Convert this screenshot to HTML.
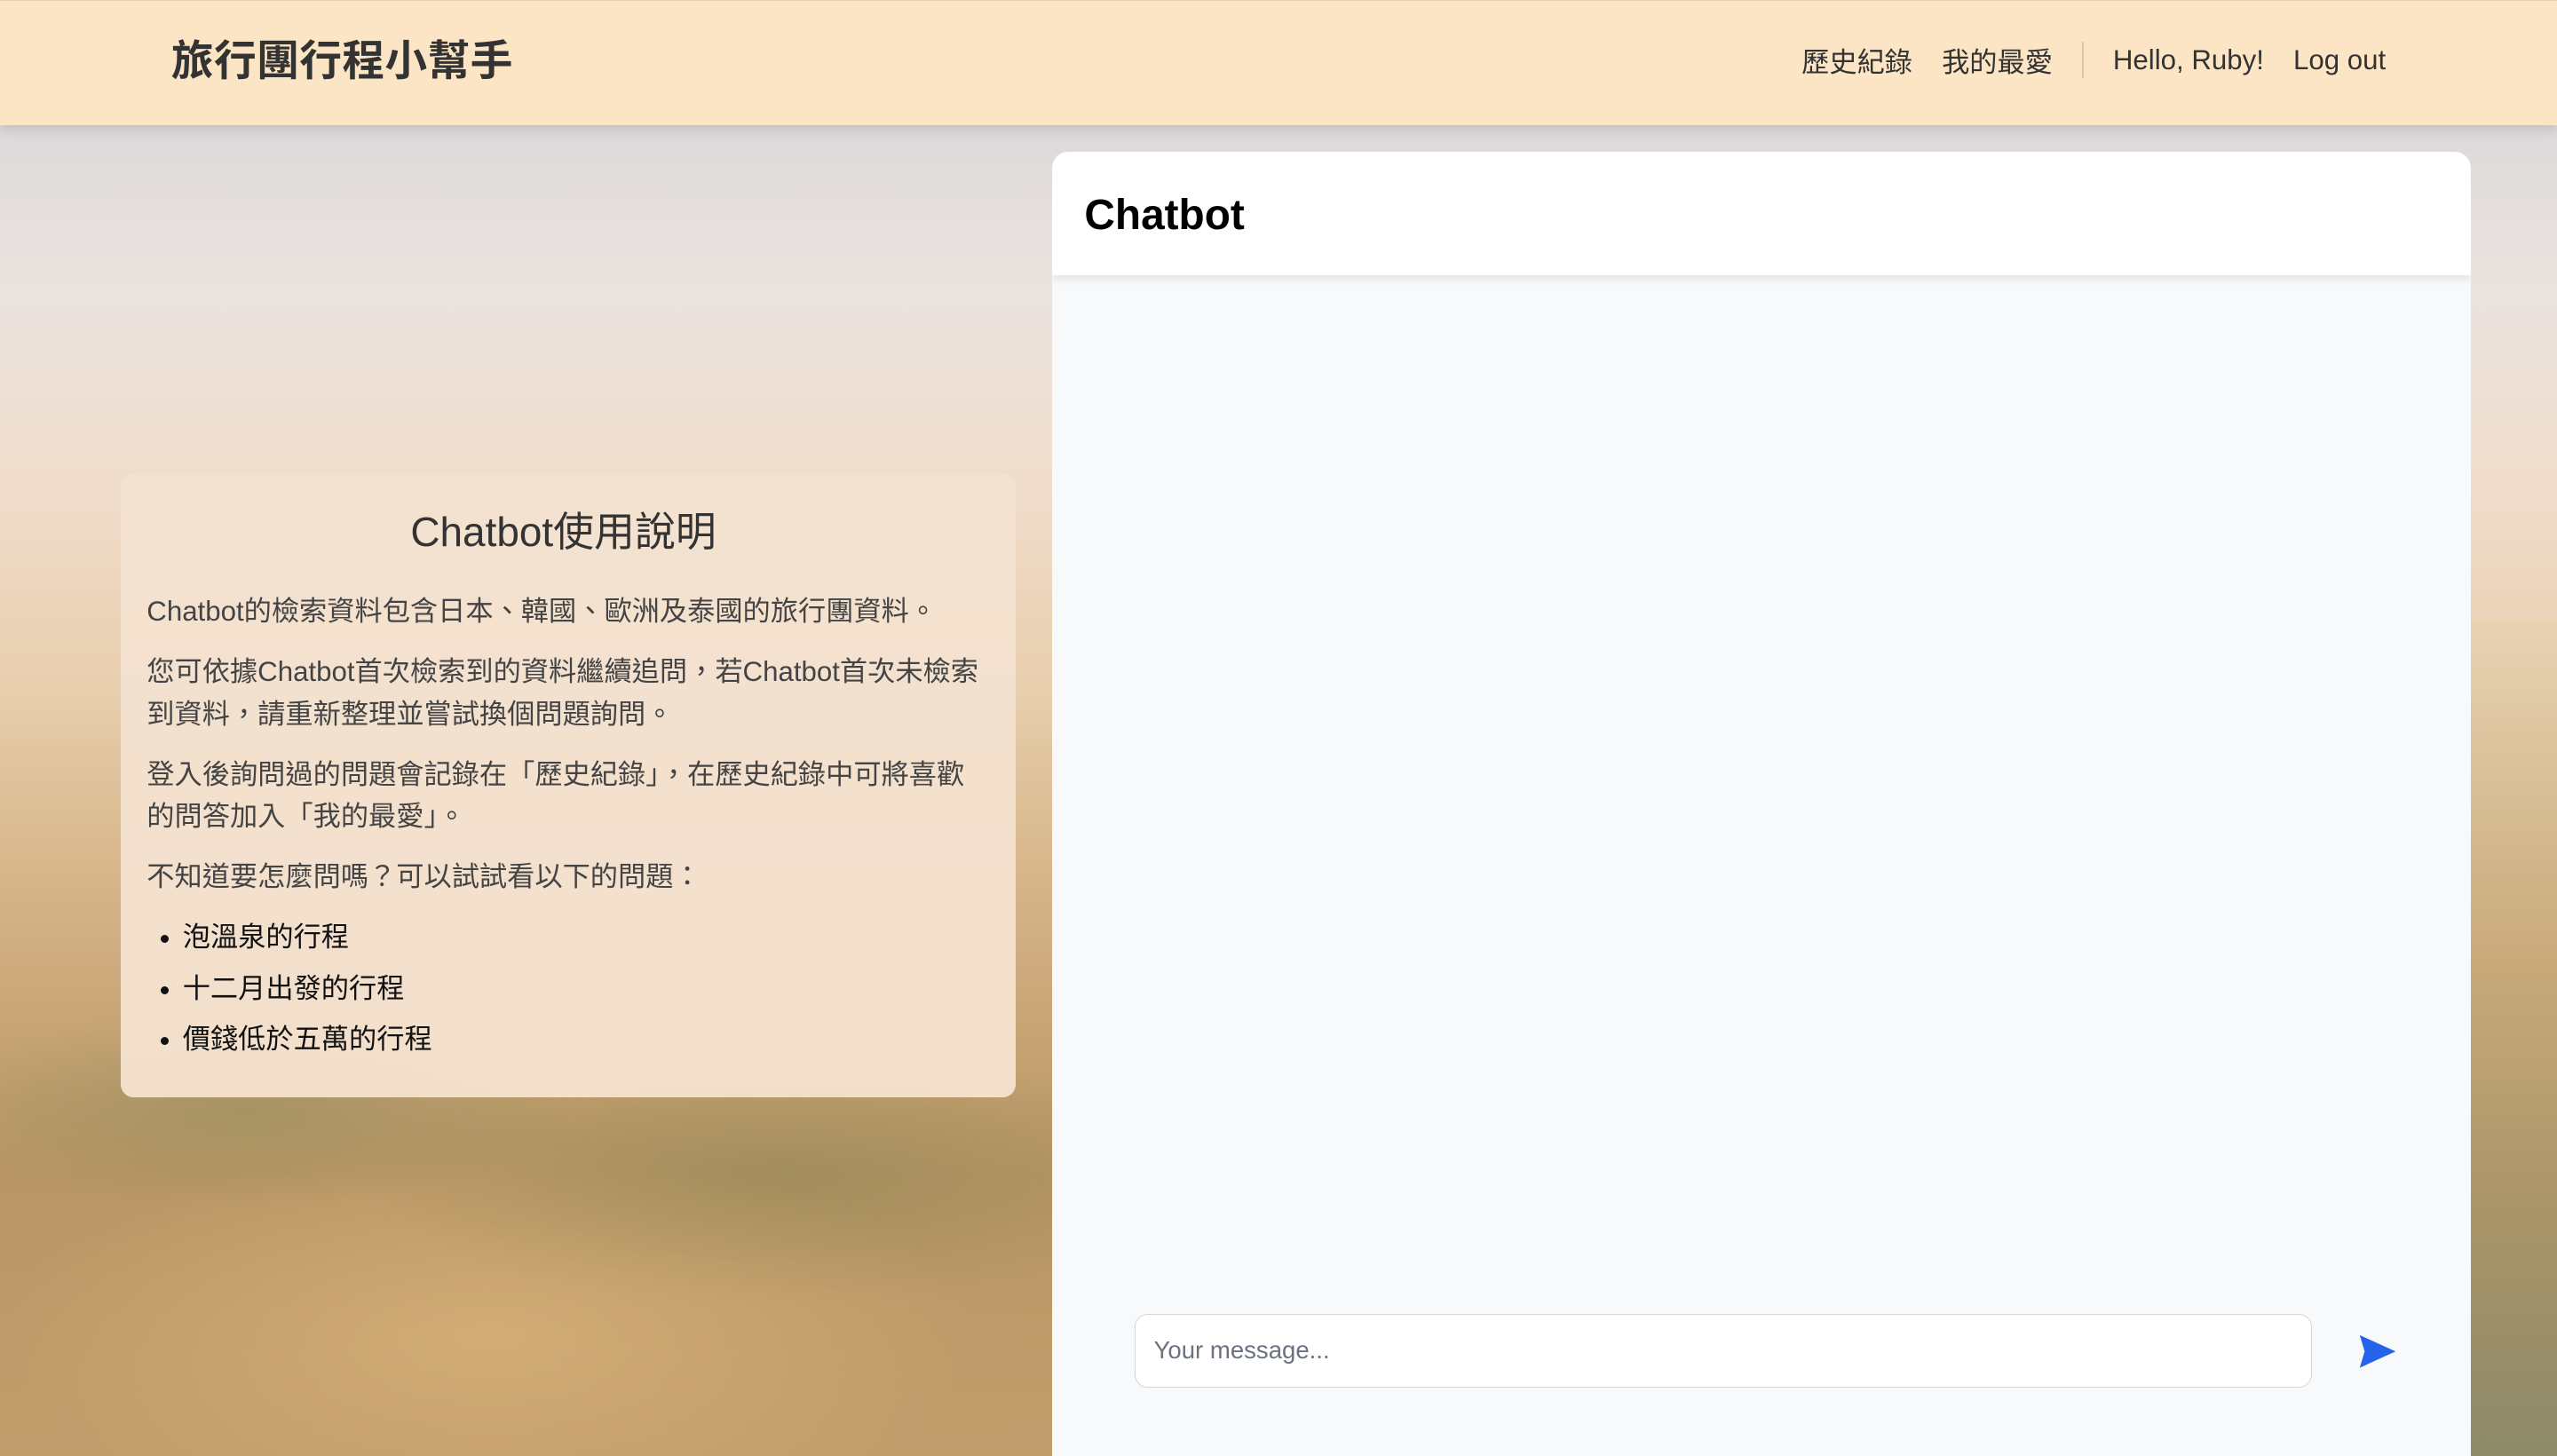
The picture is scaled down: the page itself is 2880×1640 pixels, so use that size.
<!DOCTYPE html>
<html><head><meta charset="utf-8"><style>
html,body{margin:0;padding:0;width:2880px;height:1640px;overflow:hidden}
#root{zoom:1.83673;width:1568px;height:893px;position:relative;overflow:hidden;font-family:"Liberation Sans","Noto Sans CJK TC",sans-serif;
background:linear-gradient(180deg,#dcd9da 76px,#ebe3df 180px,#f0dccb 300px,#e8cfae 420px,#d9b98e 520px,#c9a677 620px,#b99665 720px,#c19d6c 893px);}
.hill{position:absolute;left:0;top:560px;width:645px;height:340px;background:
radial-gradient(ellipse 200px 60px at 150px 120px,rgba(120,130,80,.35),transparent),
radial-gradient(ellipse 260px 80px at 480px 160px,rgba(110,120,70,.3),transparent),
radial-gradient(ellipse 300px 120px at 300px 260px,rgba(230,190,130,.5),transparent);}
.rhill{position:absolute;left:1515px;top:380px;width:60px;height:520px;background:linear-gradient(180deg,#e8d3b3,#c9aa7a 40%,#a99468 70%,#8c8a6a)}
header{position:absolute;left:0;top:0;width:1568px;height:76px;background:#fce5c4;border-top:1px solid #e3cfb2;box-shadow:0 2px 8px rgba(0,0,0,.15)}
.brand{position:absolute;left:105px;top:16px;font-size:26px;font-weight:bold;color:#333;letter-spacing:.2px}
.nav{position:absolute;right:105px;top:24px;font-size:17px;color:#333;display:flex;align-items:center}
.nav span{margin-left:18px}
.sep{width:1px;height:22px;background:#d8c7ad;margin-left:18px}
.info{position:absolute;left:74px;top:290px;width:549px;height:383px;background:rgba(244,226,208,.96);border-radius:8px;box-sizing:border-box;padding:0 22px 0 16px;color:#444;font-size:17px;line-height:26px}
.info h2{margin:18px 0 18px;text-align:center;font-weight:normal;font-size:25px;color:#333;line-height:36px}
.info p{margin:0 0 11px}
.info ul{margin:-3px 0 0;padding-left:22px;color:#111;font-size:17px;line-height:31.5px}
.card{position:absolute;left:645px;top:93px;width:870px;height:820px;background:#f8f9fb;border-radius:10px 10px 0 0;overflow:hidden}
.ch{height:76px;background:#fff;box-shadow:0 2px 5px rgba(0,0,0,.1);position:relative}
.ch b{position:absolute;left:20px;top:24px;font-size:26px;color:#000}
.inp{position:absolute;left:51px;top:713px;width:722px;height:45px;box-sizing:border-box;border:1px solid #d4d5d9;border-radius:8px;background:#fff;font-size:15px;color:#6b7280;padding:13px 11px}
.send{position:absolute;left:801px;top:725px}
</style></head><body><div id="root">
<div class="hill"></div><div class="rhill"></div>
<header><div class="brand">旅行團行程小幫手</div>
<div class="nav"><span style="margin-left:0">歷史紀錄</span><span>我的最愛</span><div class="sep"></div><span>Hello, Ruby!</span><span>Log out</span></div></header>
<div class="info"><h2>Chatbot使用說明</h2>
<p>Chatbot的檢索資料包含日本、韓國、歐洲及泰國的旅行團資料。</p>
<p>您可依據Chatbot首次檢索到的資料繼續追問，若Chatbot首次未檢索到資料，請重新整理並嘗試換個問題詢問。</p>
<p>登入後詢問過的問題會記錄在「歷史紀錄」，在歷史紀錄中可將喜歡的問答加入「我的最愛」。</p>
<p>不知道要怎麼問嗎？可以試試看以下的問題：</p>
<ul><li>泡溫泉的行程</li><li>十二月出發的行程</li><li>價錢低於五萬的行程</li></ul></div>
<div class="card"><div class="ch"><b>Chatbot</b></div>
<div class="inp">Your message...</div>
<svg class="send" width="24" height="22" viewBox="0 0 24 22"><path d="M1 1 L23 11 L1 21 L4 11 Z" fill="#2563eb"/></svg>
</div>
</div></body></html>
